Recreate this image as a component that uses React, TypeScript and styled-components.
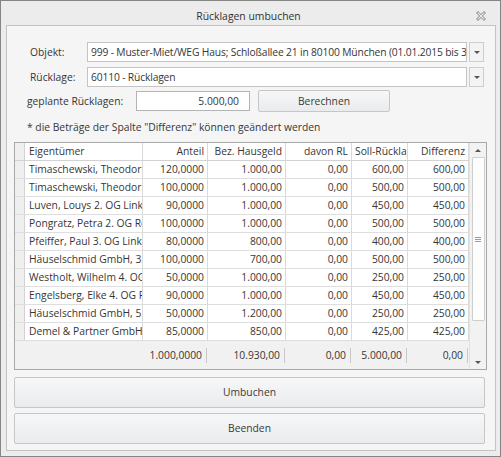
import React from "react";
import styled, { createGlobalStyle } from "styled-components";

const Global = createGlobalStyle`
  html, body { margin: 0; padding: 0; background: #ffffff; }
  * { box-sizing: border-box; }
`;

const FONT = `"Open Sans", "Noto Sans", "Liberation Sans", sans-serif`;

const Window = styled.div`
  width: 501px;
  height: 457px;
  border: 1px solid #858585;
  background: #ececec;
  display: flex;
  flex-direction: column;
  font-family: ${FONT};
  font-size: 10.3px;
  color: #363636;
`;

const TitleBar = styled.div`
  height: 24px;
  flex: 0 0 24px;
  display: flex;
  align-items: center;
  justify-content: center;
  position: relative;
  font-size: 10.4px;
  color: #333;
  padding: 5px 4px 0 0;
`;

const CloseBox = styled.div`
  position: absolute;
  right: 14px;
  top: 10px;
  width: 10px;
  height: 10px;
  display: flex;
`;

const Panel = styled.div`
  margin: 0 4px 5px 5px;
  flex: 1;
  border: 1px solid #c3c3c3;
  background: #f5f5f5;
  display: flex;
  flex-direction: column;
  padding: 16px 8px 6px 7px;
`;

const FormRow = styled.div<{ $indent: number; $h: number; $mt: number }>`
  display: flex;
  align-items: center;
  height: ${(p) => p.$h}px;
  margin-top: ${(p) => p.$mt}px;
  padding-left: ${(p) => p.$indent}px;
`;

const Label = styled.div<{ $w: number }>`
  width: ${(p) => p.$w}px;
  flex: 0 0 ${(p) => p.$w}px;
  white-space: nowrap;
`;

const ComboText = styled.div`
  width: 380px;
  height: 20px;
  background: #fff;
  border: 1px solid #c4c4c4;
  padding: 0 0 1px 3px;
  display: flex;
  align-items: center;
  white-space: nowrap;
  overflow: hidden;
  letter-spacing: -0.16px;
`;

const DropButton = styled.div`
  margin-left: 2px;
  width: 15px;
  height: 20px;
  border: 1px solid #cdcdcd;
  background: #f3f3f3;
  display: flex;
  align-items: center;
  justify-content: center;
`;

const Arrow = styled.div<{ $up?: boolean }>`
  width: 0;
  height: 0;
  border-left: 3px solid transparent;
  border-right: 3px solid transparent;
  ${(p) =>
    p.$up
      ? "border-bottom: 3px solid #555;"
      : "border-top: 3px solid #555;"}
`;

const NumberInput = styled.div`
  width: 114px;
  height: 20px;
  background: #fff;
  border: 1px solid #b4b4b4;
  display: flex;
  align-items: center;
  justify-content: flex-end;
  padding: 0 10px 1px 0;
`;

const Button = styled.div<{ $w?: number; $h: number; $mt: number; $ml?: number }>`
  ${(p) => (p.$w ? `width: ${p.$w}px;` : "")}
  height: ${(p) => p.$h}px;
  margin-top: ${(p) => p.$mt}px;
  margin-left: ${(p) => p.$ml ?? 0}px;
  border: 1px solid #c6c6c6;
  border-radius: 2px;
  background: linear-gradient(#f6f7f8, #eaebec);
  display: flex;
  align-items: center;
  justify-content: center;
  color: #3a3a3a;
  padding-bottom: 1px;
`;

const Note = styled.div`
  height: 16px;
  margin-top: 7px;
  padding-left: 13px;
  line-height: 16px;
  white-space: nowrap;
`;

const Grid = styled.div`
  margin-top: 7px;
  width: 473px;
  height: 228px;
  border: 1px solid #a9a9a9;
  display: flex;
  background: #fff;
`;

const Table = styled.div`
  width: 454px;
  display: flex;
  flex-direction: column;
`;

const COLS = "10px 118px 65px 78px 66px 56px 61px";

const Row = styled.div<{ $header?: boolean }>`
  display: grid;
  grid-template-columns: ${COLS};
  height: 18px;
  flex: 0 0 18px;
  border-bottom: 1px solid ${(p) => (p.$header ? "#d2d2d2" : "#dedede")};
  background: #fff;
`;

const Cell = styled.div<{ $align?: "left" | "right" }>`
  border-right: 1px solid #dadada;
  overflow: hidden;
  white-space: nowrap;
  text-align: ${(p) => p.$align ?? "right"};
  padding: 0 3px 0 ${(p) => (p.$align === "left" ? 4 : 3)}px;
  line-height: 16px;
`;

const Indicator = styled.div`
  background: #efefef;
  border-right: 1px solid #d2d2d2;
`;

const Footer = styled.div`
  flex: 1;
  display: grid;
  grid-template-columns: ${COLS};
  background: #f1f1f1;
`;

const FootCell = styled.div`
  display: flex;
  align-items: center;
  justify-content: flex-end;
  padding-right: 1px;
`;

const FootValue = styled.span`
  border-right: 1px solid #c8c8c8;
  padding-right: 4px;
  height: 15px;
  line-height: 14px;
`;

const ScrollBar = styled.div`
  width: 17px;
  flex: 0 0 17px;
  background: #f2f2f2;
  border-left: 1px solid #e2e2e2;
  display: flex;
  flex-direction: column;
  align-items: center;
`;

const ScrollArrowBox = styled.div`
  height: 14px;
  flex: 0 0 14px;
  display: flex;
  align-items: center;
  justify-content: center;
  width: 100%;
`;

const Thumb = styled.div`
  width: 13px;
  height: 164px;
  background: #fdfdfd;
  border: 1px solid #cfcfcf;
  border-radius: 1px;
  display: flex;
  align-items: center;
  justify-content: center;
`;

const Track = styled.div`
  flex: 1;
`;

const Grip = styled.div`
  width: 6px;
  height: 5px;
  border-top: 1px solid #9a9a9a;
  border-bottom: 1px solid #9a9a9a;
  position: relative;
  &::after {
    content: "";
    position: absolute;
    left: 0;
    right: 0;
    top: 1px;
    border-top: 1px solid #9a9a9a;
  }
`;

const rows = [
  ["Timaschewski, Theodor 1. OG Links", "120,0000", "1.000,00", "0,00", "600,00", "600,00"],
  ["Timaschewski, Theodor 1. OG Rechts", "100,0000", "1.000,00", "0,00", "500,00", "500,00"],
  ["Luven, Louys 2. OG Links", "90,0000", "1.000,00", "0,00", "450,00", "450,00"],
  ["Pongratz, Petra 2. OG Rechts", "100,0000", "1.000,00", "0,00", "500,00", "500,00"],
  ["Pfeiffer, Paul 3. OG Links", "80,0000", "800,00", "0,00", "400,00", "400,00"],
  ["Häuselschmid GmbH,  3. OG Rechts", "100,0000", "700,00", "0,00", "500,00", "500,00"],
  ["Westholt, Wilhelm 4. OG Links", "50,0000", "1.000,00", "0,00", "250,00", "250,00"],
  ["Engelsberg, Elke 4. OG Rechts", "90,0000", "1.000,00", "0,00", "450,00", "450,00"],
  ["Häuselschmid GmbH,  5. OG Links", "50,0000", "1.200,00", "0,00", "250,00", "250,00"],
  ["Demel & Partner GmbH 5. OG Rechts", "85,0000", "850,00", "0,00", "425,00", "425,00"],
];

const headers = ["Anteil", "Bez. Hausgeld", "davon RL", "Soll-Rücklage", "Differenz"];
const totals = ["1.000,0000", "10.930,00", "0,00", "5.000,00", "0,00"];

export default function App() {
  return (
    <>
      <Global />
      <Window>
        <TitleBar>
          Rücklagen umbuchen
          <CloseBox>
            <svg width="10" height="10" viewBox="0 0 10 10">
              <path d="M2 2 L8 8 M8 2 L2 8" stroke="#8f8f8f" strokeWidth="2.8" strokeLinecap="square" />
              <path d="M2 2 L8 8 M8 2 L2 8" stroke="#ececec" strokeWidth="1.1" strokeLinecap="square" />
            </svg>
          </CloseBox>
        </TitleBar>
        <Panel>
          <FormRow $indent={16} $h={20} $mt={0}>
            <Label $w={57}>Objekt:</Label>
            <ComboText>
              999 - Muster-Miet/WEG Haus; Schloßallee 21 in 80100 München (01.01.2015 bis 31.12.2015)
            </ComboText>
            <DropButton>
              <Arrow />
            </DropButton>
          </FormRow>
          <FormRow $indent={16} $h={20} $mt={5}>
            <Label $w={57}>Rücklage:</Label>
            <ComboText>60110 - Rücklagen</ComboText>
            <DropButton>
              <Arrow />
            </DropButton>
          </FormRow>
          <FormRow $indent={13} $h={22} $mt={3}>
            <Label $w={109}>geplante Rücklagen:</Label>
            <NumberInput>5.000,00</NumberInput>
            <Button $w={132} $h={22} $mt={0} $ml={8}>
              Berechnen
            </Button>
          </FormRow>
          <Note>* die Beträge der Spalte "Differenz" können geändert werden</Note>
          <Grid>
            <Table>
              <Row $header>
                <Indicator />
                <Cell $align="left">Eigentümer</Cell>
                {headers.map((h) => (
                  <Cell key={h}>{h}</Cell>
                ))}
              </Row>
              {rows.map((r, i) => (
                <Row key={i}>
                  <Indicator />
                  <Cell $align="left">{r[0]}</Cell>
                  {r.slice(1).map((v, j) => (
                    <Cell key={j}>{v}</Cell>
                  ))}
                </Row>
              ))}
              <Footer>
                <div />
                <div />
                {totals.map((t, j) => (
                  <FootCell key={j}>
                    <FootValue>{t}</FootValue>
                  </FootCell>
                ))}
              </Footer>
            </Table>
            <ScrollBar>
              <ScrollArrowBox>
                <Arrow $up />
              </ScrollArrowBox>
              <Thumb>
                <Grip />
              </Thumb>
              <Track />
              <ScrollArrowBox>
                <Arrow />
              </ScrollArrowBox>
            </ScrollBar>
          </Grid>
          <Button $h={31} $mt={7} $w={471}>
            Umbuchen
          </Button>
          <Button $h={31} $mt={5} $w={471}>
            Beenden
          </Button>
        </Panel>
      </Window>
    </>
  );
}
